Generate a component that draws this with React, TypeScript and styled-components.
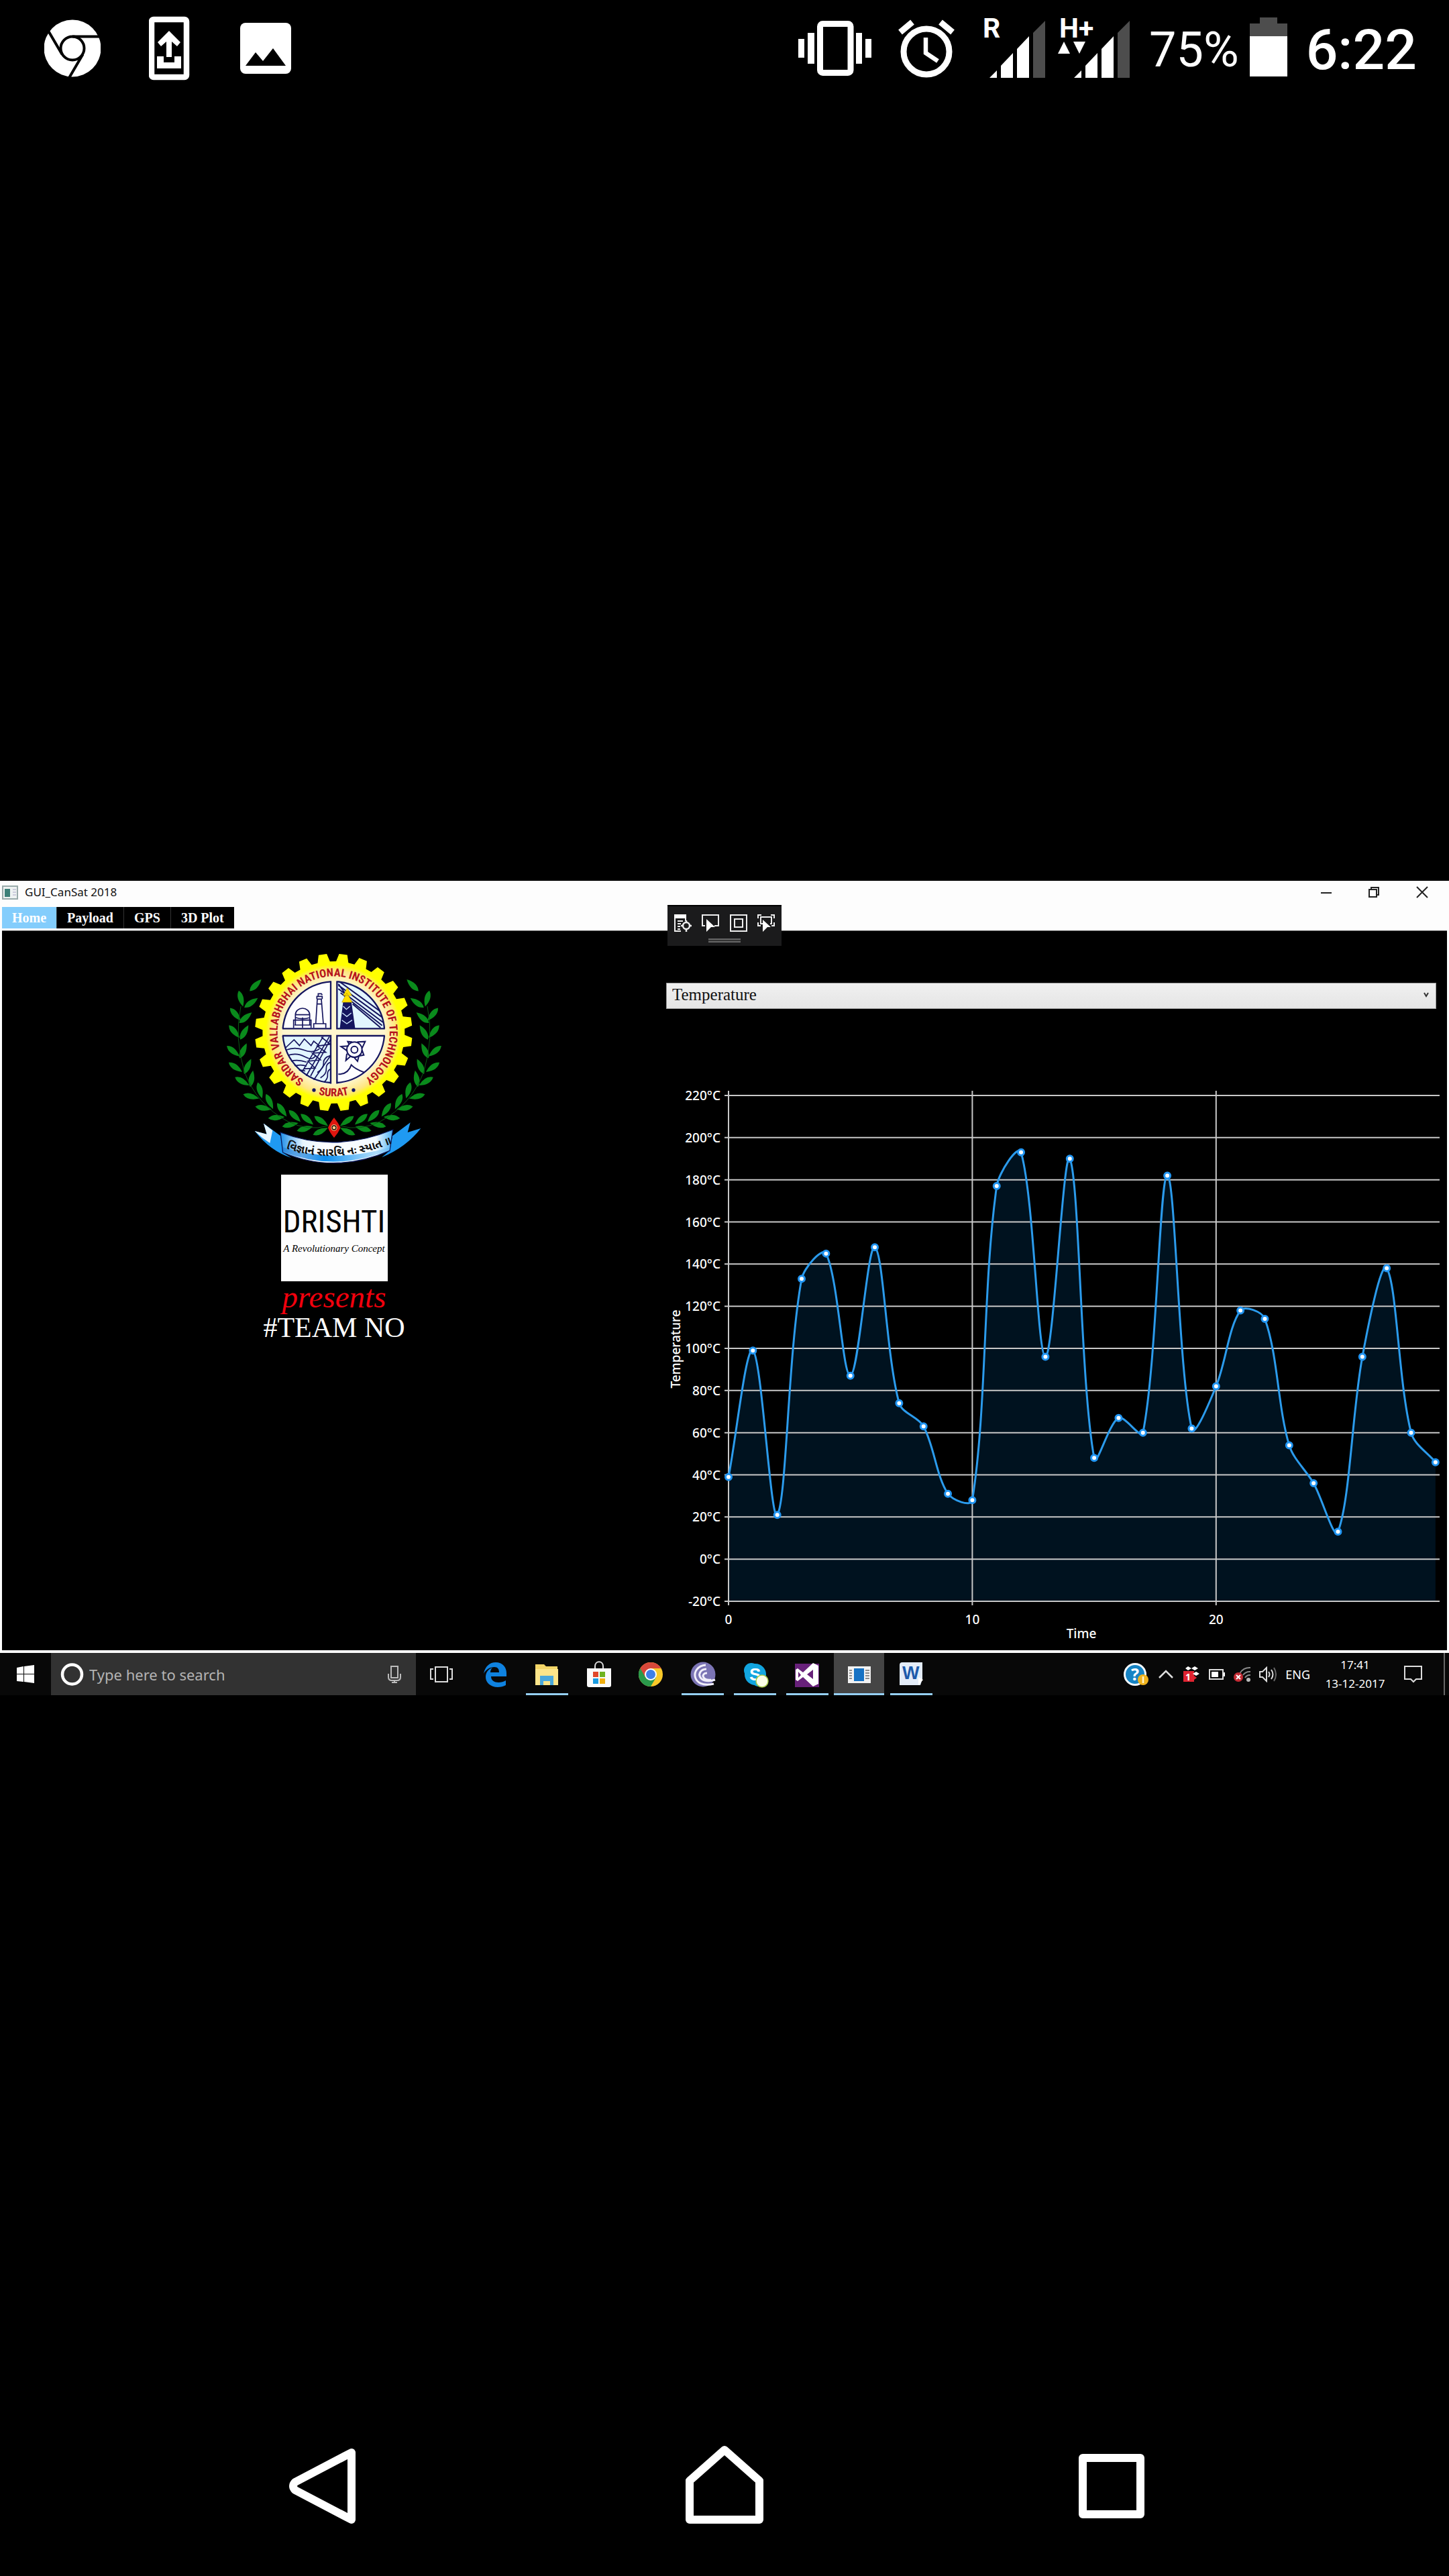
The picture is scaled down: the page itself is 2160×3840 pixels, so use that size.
import React from 'react';
import styled, { createGlobalStyle } from 'styled-components';

const UI_FONT = '"Noto Sans", "Open Sans", sans-serif';
const SERIF_FONT = '"Liberation Serif", serif';
const NARROW_FONT = '"Liberation Sans Narrow", "Roboto Condensed", "DejaVu Sans Condensed", sans-serif';

const GlobalStyle = createGlobalStyle`
  * { box-sizing: border-box; }
  body { margin: 0; background: #000; }
  button, input, select { font: inherit; color: inherit; border: 0; background: none; margin: 0; padding: 0; }
  svg { display: block; flex: none; }
`;

const Page = styled.div`
  display: grid;
  grid-template-rows: 1fr auto 1fr;
  min-height: 100vh;
  background: #000;
  color: #fff;
  font-family: ${UI_FONT};
`;

/* ---------- phone status bar ---------- */

const StatusBar = styled.header`
  display: flex;
  justify-content: space-between;
  align-items: flex-start;
  align-self: start;
  padding: 12px 48px 0 66px;
`;

const Group = styled.div<{ $gap: number }>`
  display: flex;
  align-items: flex-start;
  gap: ${(p) => p.$gap}px;
`;

const StatusText = styled.span<{ $size: number; $weight: number }>`
  font: ${(p) => p.$weight} ${(p) => p.$size}px/126px Roboto, sans-serif;
`;

const ChromeStatus = () => (
  <svg width="84" height="108" viewBox="66 12 84 108" aria-label="Chrome">
    <circle cx="108" cy="72" r="42.5" fill="#fff" />
    <g fill="none" stroke="#000" strokeWidth="4">
      <circle cx="108" cy="72" r="17.5" />
      <path d="M108 54.5H150M92.5 81L72 46M123.5 81L103 116" />
    </g>
  </svg>
);

const UpdateStatus = () => (
  <svg width="64" height="108" viewBox="222 12 64 108" aria-label="System update">
    <rect x="226" y="29" width="52" height="86" rx="3" fill="none" stroke="#fff" strokeWidth="8.5" />
    <path d="M252 46l17 17-5 6-8-7v23h-8V62l-8 7-5-6zM234 84h10v9h16v-9h10v18h-36z" fill="#fff" />
  </svg>
);

const PictureStatus = () => (
  <svg width="76" height="108" viewBox="358 12 76 108" aria-label="Picture">
    <rect x="358" y="34" width="76" height="76" rx="8" fill="#fff" />
    <path d="M366 98l15-20 11 13 15-19 19 26z" fill="#000" />
  </svg>
);

const VibrateStatus = () => (
  <svg width="109" height="108" viewBox="1189 12 109 108" aria-label="Vibrate">
    <rect x="1221.5" y="35.5" width="45.5" height="73" rx="4" fill="none" stroke="#fff" strokeWidth="9" />
    <path d="M1189 58h9v28h-9zM1203 49h10v46h-10zM1275 49h9v46h-9zM1289 58h9v28h-9z" fill="#fff" />
  </svg>
);

const AlarmStatus = () => (
  <svg width="84" height="108" viewBox="1339 12 84 108" fill="none" stroke="#fff" aria-label="Alarm">
    <circle cx="1381" cy="77" r="34" strokeWidth="9" />
    <path d="M1342 48l18-15M1402 33l18 15" strokeWidth="9" />
    <path d="M1380 56v23l18 12" strokeWidth="6.5" />
  </svg>
);

const Bars = ({ x }: { x: number }) => (
  <g transform={`translate(${x} 0)`}>
    <path d="M0 116l11-11v11zM17 116V98l18-19v37zM41 116V73l18-19v62z" fill="#fff" />
    <path d="M65 116V49l18-18v85z" fill="#4d4d4d" />
  </g>
);

const SignalR = () => (
  <svg width="96" height="108" viewBox="1463 12 96 108" aria-label="Roaming signal">
    <text x="1465" y="56" fontFamily="Roboto" fontWeight="700" fontSize="41" fill="#fff">R</text>
    <Bars x={1475} />
  </svg>
);

const SignalH = () => (
  <svg width="108" height="108" viewBox="1577 12 108 108" aria-label="HSPA signal">
    <text x="1579" y="56" fontFamily="Roboto" fontWeight="700" fontSize="41" fill="#fff">H+</text>
    <path d="M1577 80l9-18 9 18zM1600 62h18l-9 18z" fill="#fff" />
    <Bars x={1601} />
  </svg>
);

const BatteryStatus = () => (
  <svg width="56" height="108" viewBox="1864 12 56 108" aria-label="Battery">
    <path d="M1864 54V35h15v-9h26v9h15v19z" fill="#4d4d4d" />
    <path d="M1864 54h56v60h-56z" fill="#fff" />
  </svg>
);

/* ---------- desktop window ---------- */

const Desktop = styled.main`
  position: relative;
  display: flex;
  flex-direction: column;
`;

const WindowFrame = styled.section`
  background: #fdfdfd;
  padding: 0 3px 4px;
`;

const TitleBar = styled.div`
  display: flex;
  align-items: center;
  height: 39px;
  padding: 0 28px 5px 0;
  color: #111;
`;

const Title = styled.h1`
  flex: 1;
  margin: 0 0 0 10px;
  font-size: 17px;
  line-height: 28px;
  font-weight: 400;
`;

const WindowButtons = styled.div`
  display: flex;
  gap: 55px;
`;

const IconButton = styled.button`
  display: grid;
  place-items: center;
`;

const Tabs = styled.nav`
  display: inline-flex;
  height: 32px;
  margin-bottom: 3px;
  vertical-align: top;
  background: #000;
`;

const Tab = styled.button<{ $active?: boolean }>`
  padding: 0 15px;
  background: ${(p) => (p.$active ? '#83cdfc' : '#000')};
  color: #fff;
  font: 700 20px/30px ${SERIF_FONT};
  & + & { border-left: 1px solid #333; }
`;

const Content = styled.div`
  display: grid;
  grid-template-columns: 990fr 1164fr;
  background: #000;
  border-top: 1px solid #555;
`;

const Brand = styled.div`
  display: flex;
  flex-direction: column;
  align-items: center;
  padding-top: 12px;
`;

const Drishti = styled.div`
  display: flex;
  flex-direction: column;
  align-items: center;
  width: 159px;
  height: 159px;
  margin-top: 11px;
  padding-top: 40px;
  background: #fdfdfd;
  color: #000;
  white-space: nowrap;
`;

const DrishtiName = styled.span`
  font: 400 47px/60px ${NARROW_FONT};
`;

const DrishtiMotto = styled.span`
  font: italic 400 15px/20px ${SERIF_FONT};
`;

const Presents = styled.p`
  margin: 0;
  color: #f2000d;
  font: italic 400 47px/46px ${SERIF_FONT};
`;

const Team = styled.p`
  margin: 0;
  font: 400 42px/46px ${SERIF_FONT};
`;

const DataPanel = styled.div`
  padding-top: 77px;
`;

const SelectBox = styled.div`
  display: flex;
  align-items: center;
  height: 39px;
  margin: 0 16px 106px 0;
  padding: 0 10px 3px 0;
  border: 1px solid #999;
  background: linear-gradient(#f0f0f0, #e5e5e5);
`;

const Select = styled.select`
  flex: 1;
  height: 100%;
  padding-left: 8px;
  appearance: none;
  outline: 0;
  color: #111;
  font: 400 25px/34px ${SERIF_FONT};
`;

const Chart = styled.svg`
  width: 100%;
  height: auto;
  font-family: ${UI_FONT};
  font-size: 19px;
  font-weight: 500;
  fill: #fff;
`;

const DebugBar = styled.div`
  position: absolute;
  top: 36px;
  left: 50%;
  transform: translateX(-50%);
  display: grid;
  grid-template-columns: repeat(4, 1fr);
  align-content: start;
  justify-items: center;
  row-gap: 10px;
  width: 170px;
  height: 61px;
  padding: 12px 2px 0;
  background: #1b1b1c;
  border-top: 2px solid #000;
`;

const Grip = styled.span`
  grid-column: 1 / -1;
  width: 48px;
  height: 6px;
  border: solid #666;
  border-width: 2px 0;
  background: #333;
`;

/* ---------- chart ---------- */

const DATA = [39, 99, 21, 133, 145, 87, 148, 74, 63, 31, 28, 177, 193, 96, 190, 48, 67, 60, 182, 62, 82, 118, 114, 54, 36, 13, 96, 138, 60, 46];
const PLOT = { left: 93, right: 1153, top: 23, bottom: 777 };
const STEP = 36.34;
const px = (i: number) => PLOT.left + i * STEP;
const py = (v: number) => PLOT.bottom - ((v + 20) / 240) * (PLOT.bottom - PLOT.top);

function smoothPath(values: number[], smooth = 0.65) {
  const pts = values.map((v, i) => [px(i), py(v)]);
  const at = (i: number) => pts[Math.max(0, Math.min(pts.length - 1, i))];
  let d = `M${pts[0][0]} ${pts[0][1]}`;
  for (let i = 0; i < pts.length - 1; i++) {
    const q = [at(i - 1), at(i), at(i + 1), at(i + 2)];
    const mid = [0, 1, 2].map((k) => [(q[k][0] + q[k + 1][0]) / 2, (q[k][1] + q[k + 1][1]) / 2]);
    const len = [0, 1, 2].map((k) => Math.hypot(q[k + 1][0] - q[k][0], q[k + 1][1] - q[k][1]));
    const k1 = len[0] / (len[0] + len[1]);
    const k2 = len[1] / (len[1] + len[2]);
    const c: number[] = [];
    for (const a of [0, 1]) {
      const m1 = mid[0][a] + (mid[1][a] - mid[0][a]) * k1;
      c.push((mid[1][a] - m1) * smooth + q[1][a]);
    }
    for (const a of [0, 1]) {
      const m2 = mid[1][a] + (mid[2][a] - mid[1][a]) * k2;
      c.push((mid[1][a] - m2) * smooth + q[2][a]);
    }
    d += `C${c[0]} ${c[1]} ${c[2]} ${c[3]} ${q[2][0]} ${q[2][1]}`;
  }
  return d;
}

const LINE = smoothPath(DATA);
const TICKS = Array.from({ length: 13 }, (_, i) => -20 + i * 20);

const TemperatureChart = () => (
  <Chart viewBox="0 0 1164 850" role="img" aria-label="Temperature over time">
    <path d={`${LINE}V${PLOT.bottom}H${PLOT.left}z`} fill="#00121f" />
    {TICKS.map((t) => (
      <g key={t}>
        <path d={`M87 ${py(t)}H${PLOT.right}`} stroke="#c8c8c8" strokeWidth="2" />
        <text x="81" y={py(t) + 7} textAnchor="end">{`${t}°C`}</text>
      </g>
    ))}
    {[0, 10, 20].map((t) => (
      <g key={t}>
        <path d={`M${px(t)} 16V783`} stroke="#c8c8c8" strokeWidth="2" />
        <text x={px(t)} y="811" textAnchor="middle">{t}</text>
      </g>
    ))}
    <path d={LINE} fill="none" stroke="#2b9bec" strokeWidth="3" />
    {DATA.map((v, i) => (
      <circle key={i} cx={px(i)} cy={py(v)} r="4.5" fill="#fff" stroke="#2195f2" strokeWidth="3" />
    ))}
    <text x="619" y="832" textAnchor="middle">Time</text>
    <text transform="translate(21 401) rotate(-90)" textAnchor="middle">Temperature</text>
  </Chart>
);

/* ---------- institute emblem ---------- */

const CX = 535;
const CY = 417;
const polar = (r: number, deg: number) => {
  const a = ((deg - 90) * Math.PI) / 180;
  return `${(CX + r * Math.cos(a)).toFixed(1)} ${(CY + r * Math.sin(a)).toFixed(1)}`;
};
const GEAR = Array.from({ length: 24 }, (_, i) => {
  const a = i * 15 + 7;
  return [polar(318, a - 5), polar(352, a - 3), polar(352, a + 3), polar(318, a + 5)].join('L');
}).join('L');

const LEAVES = [
  [185, 207, -45], [120, 265, 75], [165, 285, -35], [95, 335, 50], [140, 352, -40], [90, 412, 50], [135, 418, -60],
  [85, 500, 40], [130, 500, -65], [95, 572, 35], [150, 570, -65], [125, 635, 30], [168, 625, -80], [165, 703, 15],
  [205, 675, 75], [220, 755, 10], [248, 725, 65], [278, 798, -5], [303, 762, 55], [340, 830, -12], [360, 790, 45],
  [405, 848, -15], [415, 805, 40], [475, 860, -25], [478, 812, 35],
];

const Sprays = () => (
  <g fill="#0a8a1c">
    {LEAVES.map(([x, y, a], i) => (
      <path key={i} transform={`translate(${x} ${y}) rotate(${a})`} d="M-36 0Q-8 -25 38 0Q-8 25 -36 0z" />
    ))}
    <path d="M120 300Q90 440 135 590Q190 740 330 815Q420 860 510 835" fill="none" stroke="#0a5a14" strokeWidth="3" />
  </g>
);

const Emblem = () => (
  <svg width="360" height="340" viewBox="-3 0 1080 1020" aria-label="Sardar Vallabhbhai National Institute of Technology, Surat">
    <defs>
      <radialGradient id="ring" gradientUnits="userSpaceOnUse" cx={CX} cy={CY} r="330">
        <stop offset="0.68" stopColor="#fff6cf" />
        <stop offset="0.84" stopColor="#ffe680" />
        <stop offset="0.92" stopColor="#ffff00" />
      </radialGradient>
      <linearGradient id="ribbon">
        <stop offset="0" stopColor="#1c8ee8" />
        <stop offset="0.2" stopColor="#e6f5ff" />
        <stop offset="0.4" stopColor="#ffffff" />
        <stop offset="0.85" stopColor="#f2faff" />
        <stop offset="1" stopColor="#49b0f5" />
      </linearGradient>
      <linearGradient id="ribbonEdge">
        <stop offset="0" stopColor="#0b63c4" stopOpacity="0.3" />
        <stop offset="0.4" stopColor="#0a8df0" />
        <stop offset="1" stopColor="#49b0f5" stopOpacity="0.2" />
      </linearGradient>
      <path id="nameArc" d={`M${polar(251, 203)}A251 251 0 1 1 ${polar(251, 155)}`} />
      <path id="cityArc" d={`M${polar(286, 200)}A286 286 0 0 0 ${polar(286, 160)}`} />
      <clipPath id="disc"><circle cx={CX} cy={CY} r="230" /></clipPath>
    </defs>

    <Sprays />
    <g transform="translate(1074 0) scale(-1 1)"><Sprays /></g>

    <path d={`M${GEAR}z`} fill="url(#ring)" />
    <g fontFamily={NARROW_FONT} fontWeight="700" fill="#b5121b">
      <text fontSize="50"><textPath href="#nameArc" startOffset="50%" textAnchor="middle">SARDAR VALLABHBHAI NATIONAL INSTITUTE OF TECHNOLOGY</textPath></text>
      <text fontSize="50"><textPath href="#cityArc" startOffset="50%" textAnchor="middle">SURAT</textPath></text>
    </g>
    <circle cx="447" cy="675" r="8" fill="#151560" />
    <circle cx="624" cy="675" r="8" fill="#151560" />

    <g clipPath="url(#disc)" stroke="#15155e" strokeWidth="7">
      <path d="M300 180h222v220H300zM550 432h222v220H550z" fill="#fdfdff" />
      <path d="M550 180h222v220H550zM300 432h222v220H300z" fill="#e2f6ff" />
    </g>
    <g fill="none" stroke="#15155e" strokeWidth="7">
      <path d="M522 190A230 230 0 0 0 308 400M550 190A230 230 0 0 1 762 400M308 432A230 230 0 0 0 522 642M762 432A230 230 0 0 1 550 642" />
    </g>

    <g fill="none" stroke="#15155e" strokeWidth="5">
      <path d="M356 397V362H434V397M364 384V338a31 28 0 0 1 64 0V384M364 338H430M360 384H434M396 350V396M364 350q32 12 66 0" />
      <path d="M446 397V378H500V397M455 378L462 268H480L489 378M460 268V256H484V268M466 256V244H480l4 6M460 290H484" />
    </g>

    <g clipPath="url(#disc)" stroke="#15155e" fill="none" strokeWidth="6">
      <path d="M556 186L760 335M556 206L760 355M556 222L756 372M566 240L752 386M620 290L745 396M556 200L600 262" />
      <path d="M580 284L566 397H628L612 284z" fill="#15155e" />
      <path d="M578 300l14 14 16-14M574 330l20 16 20-16M572 362l22 16 24-16" stroke="#cfe6ff" strokeWidth="4" />
      <path d="M596 218l20 34H578zM594 240l24 42H572z" fill="#ffe000" stroke="#b89b00" strokeWidth="2" />
    </g>

    <g clipPath="url(#disc)" stroke="#15155e" fill="none" strokeWidth="5">
      <path d="M320 486L358 450 382 476 404 446 434 476 446 456 470 476" />
      <path d="M322 496q40-16 80 0t70-6M330 520q40-14 76 6t50-8M344 546q30-10 70 4M358 568q30-10 56 0M372 590q20-8 36 0" />
      <path d="M516 436L412 612M522 446L432 612M488 436L396 590M522 520L444 632M480 438L520 470 462 478 500 506 440 510 476 540 420 546 452 576 400 580" />
      <path d="M522 550q-22 6-20 30t-26 40M522 580q-16 8-14 26t-16 34M522 520q-34 10-32 34t-28 42" />
    </g>

    <g clipPath="url(#disc)" stroke="#15155e" fill="none" strokeWidth="6">
      <circle cx="628" cy="494" r="34" />
      <circle cx="628" cy="494" r="15" />
      <path d="M640 460l36-2-14 30M662 496l8 22-20 4M648 522l-6 24-18-20M610 524l-20 18 4-30M596 500l-28-20 34-2M604 470l-6-12 20 2" />
      <path d="M556 604Q600 604 614 562Q630 580 672 596" />
    </g>

    <path d="M537 798Q556 822 566 843Q556 866 537 888Q518 866 510 843Q518 822 537 798z" fill="#e0160f" />
    <circle cx="537" cy="843" r="14" fill="#ffcf8a" />
    <circle cx="537" cy="843" r="9" fill="none" stroke="#1a0a0a" strokeWidth="4" />

    <path d="M182 858L236 872L222 824L298 880L310 956L346 978Q252 948 182 858z" fill="#1f9af2" />
    <path d="M182 858L236 872L222 824L262 856L250 912Q212 888 182 858z" fill="#e8f6ff" />
    <path d="M798 880L878 820L866 864L925 846Q860 930 750 976L786 946z" fill="#1f9af2" />
    <path d="M297 864Q540 958 800 852L786 946Q540 1052 308 954z" fill="url(#ribbon)" stroke="#0b1c60" strokeWidth="4" />
    <path d="M310 950Q540 1044 786 942L788 930Q540 1006 306 930z" fill="url(#ribbonEdge)" />
    <path id="mottoArc" d="M322 936Q540 1012 790 916" fill="none" />
    <text fontSize="50" fontWeight="700" fill="#101010" fontFamily='"Noto Sans Gujarati", "Noto Sans", sans-serif'>
      <textPath href="#mottoArc">વિજ્ઞાનં સારથિ નઃ સ્યાત ॥</textPath>
    </text>
  </svg>
);

/* ---------- taskbar ---------- */

const Taskbar = styled.footer`
  display: flex;
  align-items: stretch;
  height: 63px;
  background: #080808;
`;

const TaskButton = styled.button`
  display: grid;
  place-items: center;
  width: 76px;
`;

const SearchBox = styled.label`
  display: flex;
  align-items: center;
  width: 544px;
  padding: 0 22px 0 14px;
  background: #323232;
`;

const SearchInput = styled.input`
  flex: 1;
  min-width: 0;
  padding-left: 8px;
  outline: 0;
  font-size: 22px;
  line-height: 30px;
  &::placeholder { color: #b4b4b4; opacity: 1; }
`;

const Apps = styled.div`
  display: grid;
  grid-template-columns: repeat(9, 1fr);
  justify-items: center;
  width: 698px;
  margin-left: 3px;
`;

const AppButton = styled.button<{ $state?: 'open' | 'active' }>`
  display: grid;
  place-items: center;
  width: ${(p) => (p.$state === 'active' ? 75 : 63)}px;
  background: ${(p) => (p.$state === 'active' ? '#454545' : 'none')};
  border-top: 3px solid transparent;
  border-bottom: 3px solid ${(p) => (p.$state ? '#96d0f5' : 'transparent')};
  background-clip: border-box;
`;

const Tray = styled.div`
  display: flex;
  align-items: center;
  gap: 13px;
  margin-left: auto;
  padding-right: 6px;
`;

const Language = styled.span`
  font-size: 18px;
  line-height: 24px;
`;

const Clock = styled.time`
  width: 96px;
  margin-left: 6px;
  text-align: center;
  font-size: 17px;
  line-height: 28px;
  white-space: nowrap;
`;

const ShowDesktop = styled.button`
  align-self: stretch;
  width: 2px;
  margin-left: 18px;
  background: #666;
`;

const I = ({ w = 40, h = 40, children }: { w?: number; h?: number; children: React.ReactNode }) => (
  <svg width={w} height={h} viewBox={`0 0 ${w} ${h}`} fill="none" aria-hidden="true">{children}</svg>
);

const EdgeIcon = () => (
  <I><path d="M3 19C5 8 12 2 21 2c10 0 16 7 16 16v5H14c0 6 5 9 11 9 4 0 8-1 11-3v7c-3 2-8 3-12 3C13 39 6 32 6 24c0-7 4-12 10-14-2 2-3 4-3 7h13c0-5-2-8-7-8C12 9 6 13 3 19z" fill="#0f82e0" /></I>
);
const FolderIcon = () => (
  <I><path d="M3 5h13l3 3h17v28H3z" fill="#f3d567" /><path d="M3 12h34v24H3z" fill="#fde58a" /><path d="M10 36V22h20v14h-5v-6H15v6z" fill="#4aa8dc" /></I>
);
const StoreIcon = () => (
  <I><path d="M14 12V8c0-9 12-9 12 0v4" stroke="#ddd" strokeWidth="2" /><path d="M2 11h36v25q0 3-3 3H5q-3 0-3-3z" fill="#fbfbfb" /><path d="M11 16h8v8h-8z" fill="#e0482a" /><path d="M21 16h8v8h-8z" fill="#6fb31e" /><path d="M11 26h8v8h-8z" fill="#1a9be0" /><path d="M21 26h8v8h-8z" fill="#f2b00f" /></I>
);
const ChromeIcon = () => (
  <I>
    <circle cx="20" cy="20" r="18" fill="#f9c929" />
    <path d="M20 11H35.6A18 18 0 0 0 4.4 11L12 24z" fill="#d8473a" />
    <path d="M4.4 11A18 18 0 0 0 20 38L28 24.5 20 20z" fill="#2a9a4b" />
    <path d="M4.4 11L12.2 24.5 20 20 20 11z" fill="#d8473a" />
    <circle cx="20" cy="20" r="9" fill="#fff" /><circle cx="20" cy="20" r="7" fill="#3f7fe8" />
  </I>
);
const TorrentIcon = () => (
  <I>
    <circle cx="20" cy="20" r="18.5" fill="#7b74b4" />
    <path d="M24 6C0 8 2 42 36 34M25 12C8 13 12 36 38 28M26 18c-10 0-7 12 6 10" stroke="#f1effa" strokeWidth="3" />
  </I>
);
const SkypeIcon = () => (
  <I>
    <circle cx="14" cy="14" r="11" fill="#12a5e0" /><circle cx="20" cy="20" r="16" fill="#12a5e0" /><circle cx="25" cy="27" r="11" fill="#12a5e0" />
    <text x="11" y="29" fontFamily="Liberation Sans" fontWeight="700" fontSize="26" fill="#fff">S</text>
    <circle cx="30" cy="30" r="9" fill="#fbfde8" stroke="#a6c94a" strokeWidth="1.5" />
  </I>
);
const StudioIcon = () => (
  <I>
    <path d="M2 4h36v35H2z" fill="#68217a" />
    <path d="M29 3l8 4v27l-8 4L14 24l-8 6-3-2V13l3-2 8 6zM29 13l-9 7 9 7zM7 16v9l4-4z" fill="#fff" fillRule="evenodd" />
  </I>
);
const CanSatIcon = () => (
  <I><path d="M3 8h34v25H3z" fill="#f2f2f2" /><path d="M12 11h15v19H12z" fill="#1672c4" /><path d="M5 14h4M5 18h4M5 22h4M5 26h4M29 14h6M29 18h6M29 22h6M29 26h6" stroke="#8c8c8c" strokeWidth="2" /></I>
);
const WordIcon = () => (
  <I>
    <path d="M3 6q0-4 4-4h30v25l-3 9H3z" fill="#e3ecf8" />
    <path d="M31 24l7 4-7 8z" fill="#fff" />
    <text x="7" y="27" fontFamily="Liberation Sans" fontWeight="700" fontSize="27" fill="#1c5aab">W</text>
  </I>
);

const APPS: { name: string; icon: React.ReactNode; state?: 'open' | 'active' }[] = [
  { name: 'Edge', icon: <EdgeIcon /> },
  { name: 'File Explorer', icon: <FolderIcon />, state: 'open' },
  { name: 'Store', icon: <StoreIcon /> },
  { name: 'Chrome', icon: <ChromeIcon /> },
  { name: 'BitTorrent', icon: <TorrentIcon />, state: 'open' },
  { name: 'Skype', icon: <SkypeIcon />, state: 'open' },
  { name: 'Visual Studio', icon: <StudioIcon />, state: 'open' },
  { name: 'GUI_CanSat', icon: <CanSatIcon />, state: 'active' },
  { name: 'Word', icon: <WordIcon />, state: 'open' },
];

/* ---------- phone navigation ---------- */

const NavBar = styled.nav`
  display: grid;
  grid-template-columns: repeat(3, 588px);
  justify-content: center;
  align-self: end;
  height: 268px;
`;

const NavButton = styled.button`
  display: grid;
  place-items: center;
`;

const NavIcon = ({ children }: { children: React.ReactNode }) => (
  <svg width="140" height="140" viewBox="-70 -70 140 140" fill="none" stroke="#fff" strokeWidth="12" strokeLinejoin="round" aria-hidden="true">{children}</svg>
);

export default function App() {
  return (
    <>
      <GlobalStyle />
      <Page>
        <StatusBar>
          <Group $gap={72}>
            <ChromeStatus />
            <UpdateStatus />
            <PictureStatus />
          </Group>
          <Group $gap={28}>
            <Group $gap={40}>
              <VibrateStatus />
              <AlarmStatus />
              <Group $gap={18}>
                <SignalR />
                <SignalH />
              </Group>
            </Group>
            <Group $gap={16}>
              <StatusText $size={72} $weight={400}>75%</StatusText>
              <BatteryStatus />
            </Group>
            <StatusText $size={84} $weight={500}>6:22</StatusText>
          </Group>
        </StatusBar>

        <Desktop>
          <WindowFrame>
            <TitleBar>
              <I w={24} h={22}>
                <path d="M1 2h22v19H1z" fill="#eef2f2" stroke="#9aa" strokeWidth="2" />
                <path d="M4 6h8v12H4z" fill="#3c8078" />
                <path d="M16 7h5M16 11h5M16 15h5" stroke="#ccd" strokeWidth="2" />
              </I>
              <Title>GUI_CanSat 2018</Title>
              <WindowButtons>
                <IconButton aria-label="Minimize"><I w={16} h={18}><path d="M0 10h16" stroke="#222" strokeWidth="2" /></I></IconButton>
                <IconButton aria-label="Restore"><I w={16} h={18}><path d="M1 5h11v11H1zM4 5V2h11v11h-3" stroke="#222" strokeWidth="2" /></I></IconButton>
                <IconButton aria-label="Close"><I w={18} h={18}><path d="M1 1l16 16M17 1L1 17" stroke="#222" strokeWidth="2" /></I></IconButton>
              </WindowButtons>
            </TitleBar>
            <Tabs>
              <Tab $active>Home</Tab>
              <Tab>Payload</Tab>
              <Tab>GPS</Tab>
              <Tab>3D Plot</Tab>
            </Tabs>
            <Content>
              <Brand>
                <Emblem />
                <Drishti>
                  <DrishtiName>DRISHTI</DrishtiName>
                  <DrishtiMotto>A Revolutionary Concept</DrishtiMotto>
                </Drishti>
                <Presents>presents</Presents>
                <Team>#TEAM NO</Team>
              </Brand>
              <DataPanel>
                <SelectBox>
                  <Select aria-label="Measurement" defaultValue="Temperature">
                    <option>Temperature</option>
                  </Select>
                  <I w={8} h={8}><path d="M1 1l3 5 3-5" stroke="#333" strokeWidth="2" /></I>
                </SelectBox>
                <TemperatureChart />
              </DataPanel>
            </Content>
          </WindowFrame>

          <DebugBar>
            <IconButton aria-label="Go to live visual tree">
              <I w={26} h={26}><path d="M1 6v19h9M17 6v4M5 10h8M5 14h5M5 18h4M5 22h4" stroke="#eee" strokeWidth="2" /><path d="M0 0h18v6H0z" fill="#fff" /><circle cx="18" cy="17" r="5" stroke="#eee" strokeWidth="2.5" /><path d="M18 9v4M18 21v5M10 17h3M23 17h3" stroke="#eee" strokeWidth="2.5" /></I>
            </IconButton>
            <IconButton aria-label="Enable selection">
              <I w={26} h={26}><path d="M5 17H1V1h24v16h-6" stroke="#eee" strokeWidth="2" /><path d="M7 7l13 12h-6l-7 7z" fill="#fff" /></I>
            </IconButton>
            <IconButton aria-label="Display layout adorners">
              <I w={26} h={26}><path d="M1 1h24v24H1zM7 7h12v12H7z" stroke="#eee" strokeWidth="2" /></I>
            </IconButton>
            <IconButton aria-label="Track focused element">
              <I w={26} h={26}><path d="M1 6V1h5M20 1h5v5M1 12v5h4M25 12v5h-4M8 14H5V4h16v10h-2" stroke="#eee" strokeWidth="2" /><path d="M8 8l12 11h-5l-7 7z" fill="#fff" /></I>
            </IconButton>
            <Grip />
          </DebugBar>

          <Taskbar>
            <TaskButton aria-label="Start">
              <I w={26} h={28}><path d="M0 4l10-2v11H0zM11 2l15-2v13H11zM0 14h10v11L0 24zM11 14h15v13l-15-2z" fill="#fff" /></I>
            </TaskButton>
            <SearchBox>
              <I w={35} h={36}><circle cx="17.5" cy="18" r="14.5" stroke="#fff" strokeWidth="4.5" /></I>
              <SearchInput aria-label="Search" placeholder="Type here to search" />
              <I w={20} h={26}><path d="M5 1h10v17H5zM1 12v5q0 5 5 5h8q5 0 5-5v-5M10 22v4M6 25h8" stroke="#bbb" strokeWidth="2" /></I>
            </SearchBox>
            <TaskButton aria-label="Task view">
              <I w={34} h={24}><path d="M8 1h18v22H8zM5 4H1v15h4M29 4h4v15h-4" stroke="#ddd" strokeWidth="2" /></I>
            </TaskButton>
            <Apps>
              {APPS.map((a) => (
                <AppButton key={a.name} $state={a.state} aria-label={a.name}>{a.icon}</AppButton>
              ))}
            </Apps>
            <Tray>
              <I w={38} h={36}>
                <circle cx="17" cy="18" r="15.5" fill="#1583c4" stroke="#f5fbff" strokeWidth="3" />
                <text x="11" y="27" fontFamily="Noto Sans" fontWeight="700" fontSize="25" fill="#fff">?</text>
                <circle cx="29" cy="26" r="8" fill="#f0b41e" />
                <path d="M29 21v10" stroke="#fff5cc" strokeWidth="2.5" />
              </I>
              <I w={24} h={14}><path d="M2 12l10-10 10 10" stroke="#ddd" strokeWidth="2.5" /></I>
              <I w={26} h={24}>
                <path d="M1 7h16v16H1z" fill="#e02330" />
                <path d="M8 0l5 3-5 3-4-3zM18 0l5 3-5 3-5-3zM20 8l5 3-5 3-5-3z" fill="#fff" />
                <path d="M17 14l4 3-4 3z" fill="#e02330" />
                <text x="4" y="21" fontFamily="Noto Sans" fontWeight="700" fontSize="14" fill="#fff">1</text>
              </I>
              <I w={24} h={16}><path d="M1 1h20v14H1z" stroke="#ddd" strokeWidth="2" /><path d="M4 4h10v8H4zM22 5h2v6h-2z" fill="#fff" /></I>
              <I w={25} h={24}>
                <path d="M9 11A16 16 0 0 1 25 2M14 13A12 12 0 0 1 25 8M17 17A8 8 0 0 1 25 13" stroke="#8a8a8a" strokeWidth="2" />
                <circle cx="22" cy="20" r="3" fill="#bbb" />
                <circle cx="7" cy="16" r="7" fill="#c42b34" /><path d="M4 13l6 6M10 13l-6 6" stroke="#fff" strokeWidth="2" />
              </I>
              <I w={26} h={24}><path d="M1 8h4l6-6v20l-6-6H1z" stroke="#ddd" strokeWidth="2" /><path d="M14 8q3 4 0 8M18 5q5 7 0 14" stroke="#ddd" strokeWidth="2" /><path d="M22 2q6 10 0 20" stroke="#666" strokeWidth="2" /></I>
              <Language>ENG</Language>
              <Clock>17:41<br />13-12-2017</Clock>
              <I w={40} h={26}><path d="M13 1h25v19h-8l-4 4-4-4h-9z" stroke="#ddd" strokeWidth="2" /></I>
              <ShowDesktop aria-label="Show desktop" />
            </Tray>
          </Taskbar>
        </Desktop>

        <NavBar>
          <NavButton aria-label="Back"><NavIcon><path d="M32 -50V50L-52 6Q-58 0 -52 -6z" /></NavIcon></NavButton>
          <NavButton aria-label="Home"><NavIcon><path d="M-52 -8L0 -54L52 -8V50H-52z" /></NavIcon></NavButton>
          <NavButton aria-label="Recent apps"><NavIcon><path d="M-54 -42H32V42H-54z" /></NavIcon></NavButton>
        </NavBar>
      </Page>
    </>
  );
}
